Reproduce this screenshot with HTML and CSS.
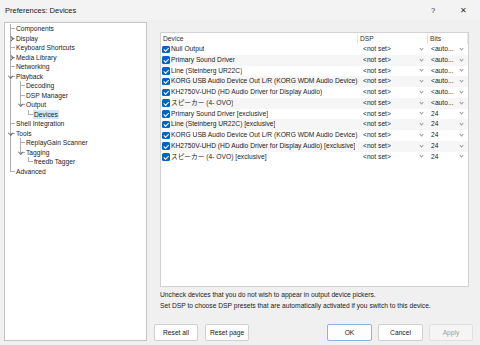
FILE: index.html
```html
<!DOCTYPE html>
<html>
<head>
    <title>Preferences: Devices</title>
    <link rel="stylesheet" href="styles.css">
</head>
<body>
    <div class="window">
        <div class="titlebar">
            <span class="title">Preferences: Devices</span>
            <span class="tb-btn">?</span>
            <span class="tb-btn close">&#x2715;</span>
        </div>

        <div class="main">
            <!-- navigation tree -->
            <div class="tree">
                <div class="node"><i class="c tee"></i><span class="lbl">Components</span></div>
                <div class="node"><i class="c tee exp"><b class="chev right"></b></i><span class="lbl">Display</span></div>
                <div class="node"><i class="c tee"></i><span class="lbl">Keyboard Shortcuts</span></div>
                <div class="node"><i class="c tee exp"><b class="chev right"></b></i><span class="lbl">Media Library</span></div>
                <div class="node"><i class="c tee"></i><span class="lbl">Networking</span></div>
                <div class="node"><i class="c tee exp"><b class="chev down"></b></i><span class="lbl">Playback</span></div>
                <div class="node"><i class="c vert"></i><i class="c tee"></i><span class="lbl">Decoding</span></div>
                <div class="node"><i class="c vert"></i><i class="c tee"></i><span class="lbl">DSP Manager</span></div>
                <div class="node"><i class="c vert"></i><i class="c corner exp"><b class="chev down"></b></i><span class="lbl">Output</span></div>
                <div class="node"><i class="c vert"></i><i class="c narrow"></i><i class="c corner"></i><span class="lbl selected">Devices</span></div>
                <div class="node"><i class="c tee"></i><span class="lbl">Shell Integration</span></div>
                <div class="node"><i class="c tee exp"><b class="chev down"></b></i><span class="lbl">Tools</span></div>
                <div class="node"><i class="c vert"></i><i class="c tee"></i><span class="lbl">ReplayGain Scanner</span></div>
                <div class="node"><i class="c vert"></i><i class="c corner exp"><b class="chev down"></b></i><span class="lbl">Tagging</span></div>
                <div class="node"><i class="c vert"></i><i class="c narrow"></i><i class="c corner"></i><span class="lbl">freedb Tagger</span></div>
                <div class="node"><i class="c corner"></i><span class="lbl">Advanced</span></div>
            </div>

            <!-- page -->
            <div class="page">
                <div class="list">
                    <div class="lhead">
                        <div class="hcell">Device</div>
                        <div class="hcell">DSP</div>
                        <div class="hcell">Bits</div>
                    </div>
                    <div id="rows"></div>
                </div>

                <p class="hint">Uncheck devices that you do not wish to appear in output device pickers.</p>
                <p class="hint">Set DSP to choose DSP presets that are automatically activated if you switch to this device.</p>

                <div class="buttons">
                    <button class="btn">Reset all</button>
                    <button class="btn">Reset page</button>
                    <span class="spacer"></span>
                    <button class="btn wide default">OK</button>
                    <button class="btn wide">Cancel</button>
                    <button class="btn" disabled>Apply</button>
                </div>
            </div>
        </div>
    </div>

    <script>
        // Output devices as listed by the player
        const devices = [
            ["Null Output", "<auto..."],
            ["Primary Sound Driver", "<auto..."],
            ["Line (Steinberg UR22C)", "<auto..."],
            ["KORG USB Audio Device Out L/R (KORG WDM Audio Device)", "<auto..."],
            ["KH2750V-UHD (HD Audio Driver for Display Audio)", "<auto..."],
            ["スピーカー (4- OVO)", "<auto..."],
            ["Primary Sound Driver [exclusive]", "24"],
            ["Line (Steinberg UR22C) [exclusive]", "24"],
            ["KORG USB Audio Device Out L/R (KORG WDM Audio Device) [exclusive]", "24"],
            ["KH2750V-UHD (HD Audio Driver for Display Audio) [exclusive]", "24"],
            ["スピーカー (4- OVO) [exclusive]", "24"]
        ];

        const rows = document.getElementById('rows');
        devices.forEach(d => {
            const row = document.createElement('div');
            row.className = 'row';

            const dev = document.createElement('div');
            dev.className = 'cell dev';
            const cb = document.createElement('span');
            cb.className = 'cb';
            const name = document.createElement('span');
            name.className = 'name';
            name.textContent = d[0];
            dev.appendChild(cb);
            dev.appendChild(name);

            const dsp = document.createElement('div');
            dsp.className = 'cell dd';
            dsp.innerHTML = '<span class="val"></span><i class="arrow"></i>';
            dsp.querySelector('.val').textContent = '<not set>';

            const bits = document.createElement('div');
            bits.className = 'cell dd bits';
            bits.innerHTML = '<span class="val"></span><i class="arrow"></i>';
            bits.querySelector('.val').textContent = d[1];

            row.appendChild(dev);
            row.appendChild(dsp);
            row.appendChild(bits);
            rows.appendChild(row);
        });
    </script>
</body>
</html>
```

FILE: styles.css
```css
body { margin: 0; background: #f0f0f0; font-family: "Liberation Sans", "Noto Sans CJK JP", sans-serif; font-size: 6.7px; color: #1b1b1b; }
.window { width: 480px; height: 345px; display: flex; flex-direction: column; background: #f0f0f0; overflow: hidden; }

.titlebar { height: 20px; display: flex; align-items: center; padding-left: 5px; background: #f3f3f3; }
.title { flex: 1; font-size: 7.5px; color: #1a1a1a; }
.tb-btn { width: 30px; text-align: center; font-size: 7.5px; color: #333; }
.close { font-size: 8px; margin-right: 2px; }

.main { flex: 1; display: flex; padding: 2px 4px 4px 4px; }

/* tree */
.tree { width: 141px; background: #fff; border: 1px solid #c4c4c4; padding: 1px 0 0 0; }
.node { display: flex; height: 9.5px; line-height: 9.5px; white-space: nowrap; }
.c { display: inline-flex; align-items: center; justify-content: center; width: 10px; height: 9.5px; flex: none; }
.c.narrow { width: 8px; }
.tee { background: linear-gradient(#b0b0b0, #b0b0b0) 5px 0 / 1px 100% no-repeat, linear-gradient(#b0b0b0, #b0b0b0) 5px 50% / 5px 1px no-repeat; }
.corner { background: linear-gradient(#b0b0b0, #b0b0b0) 5px 0 / 1px 50% no-repeat, linear-gradient(#b0b0b0, #b0b0b0) 5px 50% / 5px 1px no-repeat; }
.vert { background: linear-gradient(#b0b0b0, #b0b0b0) 5px 0 / 1px 100% no-repeat; }
.chev { display: block; width: 2.5px; height: 2.5px; border: solid #6a6a6a; border-width: 0 1px 1px 0; margin-left: 1px; }
.chev.right { transform: rotate(-45deg); }
.chev.down { transform: translateY(-1px) rotate(45deg); }
.lbl { padding: 0 1px; }
.selected { background: #cce8ff; }

/* right page */
.page { width: 323px; margin-left: 6px; display: flex; flex-direction: column; }
.list { margin: 10px 0 0 7px; width: 307px; height: 253px; background: #fff; border: 1px solid #d2d2d2; overflow: hidden; }
.lhead, .row { display: grid; grid-template-columns: 197px 70px 40px; }
.lhead { height: 11px; line-height: 11px; color: #333; }
.hcell { padding-left: 2px; border-right: 1px solid #e6e6e6; }
.row { height: 10.75px; line-height: 10.75px; white-space: nowrap; }
.row:nth-child(even) { background: #f6f6f6; }
.cell { overflow: hidden; }
.dev { display: flex; align-items: center; padding-left: 1px; }
.name { overflow: hidden; }
.cb { flex: none; width: 7.5px; height: 7.5px; margin-right: 1.5px; border-radius: 1.5px; background: #0063c4; display: inline-flex; align-items: center; justify-content: center; }
.cb::after { content: ""; width: 1.5px; height: 3.5px; border: solid #fff; border-width: 0 1px 1px 0; transform: translateY(-0.5px) rotate(45deg); }
.dd { display: flex; align-items: center; padding-left: 5px; padding-right: 5px; }
.bits { padding-left: 3px; }
.val { flex: 1; overflow: hidden; }
.arrow { width: 2px; height: 2px; border: solid #9a9a9a; border-width: 0 1px 1px 0; transform: translateY(-1px) rotate(45deg); }

.hint { margin: 0; padding-left: 7px; line-height: 11px; color: #1b1b1b; }
.hint:first-of-type { margin-top: 2px; }

.buttons { display: flex; margin-top: auto; gap: 7px; padding: 0 3px 0 1px; }
.btn { width: 44px; height: 17px; padding: 0; font: inherit; color: #1b1b1b; background: #fdfdfd; border: 1px solid #d0d0d0; border-radius: 2px; }
.btn.wide { width: 45px; margin-right: -1px; }
.spacer { flex: 1; }
.default { border-color: #80b7e6; }
.btn:disabled { color: #a0a0a0; background: #f5f5f5; border-color: #e0e0e0; }
```
